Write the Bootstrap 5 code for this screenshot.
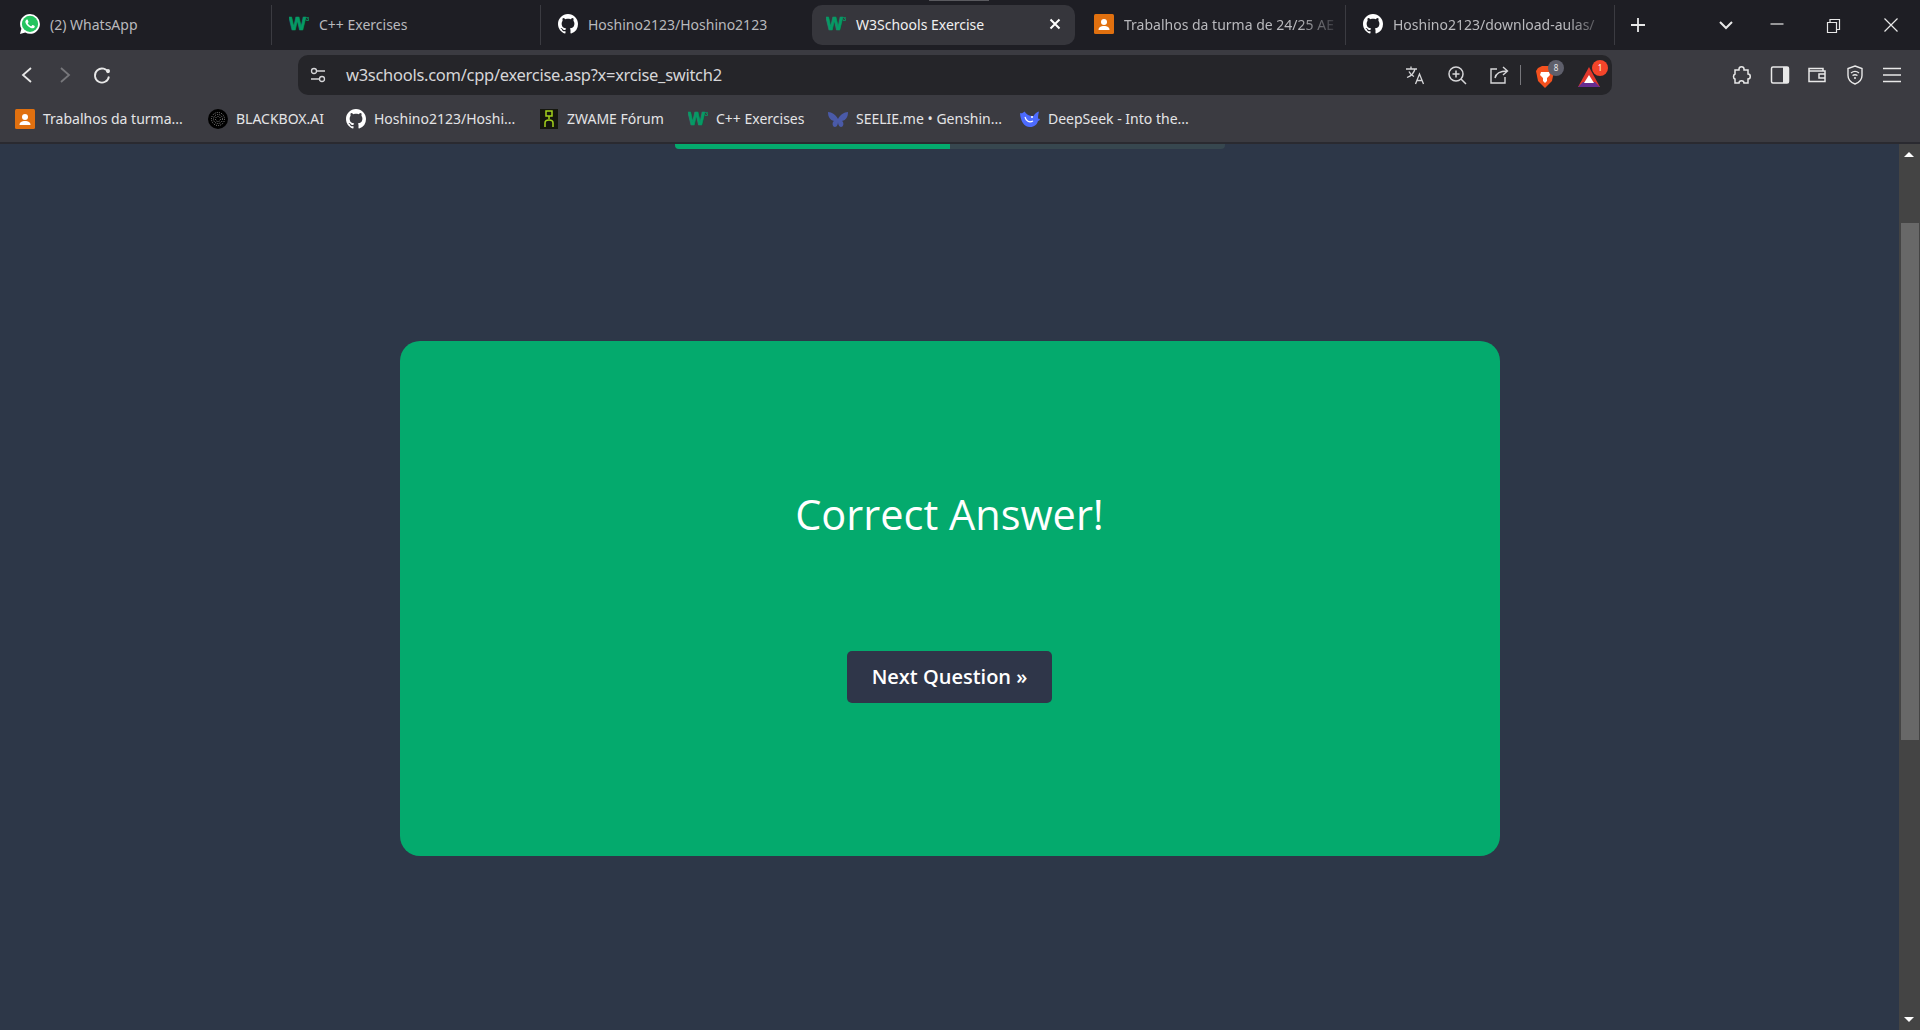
<!DOCTYPE html>
<html lang="en">
<head>
  <meta charset="UTF-8">
  <title>W3Schools Exercise</title>
  <link href="https://cdn.jsdelivr.net/npm/bootstrap@5.3.3/dist/css/bootstrap.min.css" rel="stylesheet">
  <style>
    body {
      height: 1030px;
      overflow: hidden;
      background-color: #2d3748;
      font-family: "Noto Sans", "Open Sans", sans-serif;
    }
    .tab-strip {
      height: 50px;
      padding: 5px 0 0 3px;
      background-color: #1e1e24;
      font-size: 14px;
      color: #b9b9bd;
      position: relative;
    }
    .tab-strip::before {
      content: "";
      position: absolute;
      left: 929px;
      top: 0;
      width: 60px;
      height: 1px;
      background-color: #5a5a5f;
    }
    .tab-item {
      width: 269px;
      height: 40px;
      padding: 0 0 2px 17px;
      flex: none;
      white-space: nowrap;
      overflow: hidden;
      border-right: 1px solid #3b3b41;
    }
    .tab-item.no-sep { border-right-color: transparent; }
    .tab-active {
      width: 263px;
      margin: 0 2px 0 2px;
      padding: 0 10px 2px 14px;
      height: 40px;
      flex: none;
      border-radius: 10px;
      background-color: #36363c;
      color: #f0f0f0;
    }
    .tab-fade {
      width: 218px;
      -webkit-mask-image: linear-gradient(to right, #000 80%, transparent);
      mask-image: linear-gradient(to right, #000 80%, transparent);
    }
    .fav { width: 20px; height: 20px; flex: none; margin-right: 10px; }
    .win-btn { position: absolute; top: 15px; width: 20px; height: 20px; }
    .tool-row {
      height: 45px;
      background-color: #3b3b41;
    }
    .nav-icons { width: 298px; padding: 7px 0 0 17px; gap: 17.5px; margin-top: 8px; }
    .ico { width: 20px; height: 20px; flex: none; }
    .addr-bar {
      width: 1314px;
      height: 40px;
      margin-top: 5px;
      padding: 0 11px 0 10px;
      border-radius: 10px;
      background-color: #252529;
      color: #d6d6d8;
      font-size: 16.5px;
      letter-spacing: -.28px;
    }
    .addr-text { margin-left: 18px; }
    .addr-tools { gap: 22px; }
    .addr-sep { width: 1px; height: 20px; background-color: #77777b; margin: 0 -10px 0 -11px; }
    .badge-host { position: relative; width: 24px; height: 24px; }
    .badge-host + .badge-host { margin-left: -2px; }
    .mini-count {
      position: absolute;
      top: -3px;
      right: -7px;
      width: 16px;
      height: 16px;
      border-radius: 50%;
      font-size: 8px;
      line-height: 16px;
      text-align: center;
      color: #e8e8e8;
    }
    .ext-icons { padding-left: 120px; gap: 17.5px; margin-top: 7px; }
    .mark-row {
      height: 49px;
      padding: 0 0 0 15px;
      background-color: #3b3b41;
      border-bottom: 2px solid #2a2a30;
      color: #e4e4e6;
      font-size: 14px;
      white-space: nowrap;
    }
    .mark-item { flex: none; }
    .mark-item .fav { margin-right: 8px; }
    .mark-item:nth-child(1) { width: 193px; }
    .mark-item:nth-child(2) { width: 138px; }
    .mark-item:nth-child(3) { width: 193px; }
    .mark-item:nth-child(4) { width: 149px; }
    .mark-item:nth-child(5) { width: 140px; }
    .mark-item:nth-child(6) { width: 192px; }
    .page-area { height: 886px; }
    .page-main { width: 1899px; }
    .top-progress {
      width: 550px;
      height: 5px;
      background-color: #37474f;
      border-radius: 0 0 4px 4px;
    }
    .top-progress .progress-bar { background-color: #04aa6d; }
    .result-panel {
      width: 1100px;
      height: 515px;
      margin-top: 192px;
      border-radius: 20px;
      background-color: #04aa6d;
      color: #fff;
    }
    .result-title {
      margin: 143px 0 0 0;
      font-size: 41.5px;
      line-height: 60px;
      font-weight: 400;
      font-family: "Open Sans", "Noto Sans", sans-serif;
    }
    .next-btn {
      width: 205px;
      height: 52px;
      margin-top: 107px;
      padding: 0;
      border: 0;
      border-radius: 5px;
      background-color: #2f3649;
      color: #fff;
      font-size: 20px;
      font-weight: 600;
      font-family: "Open Sans", "Noto Sans", sans-serif;
    }
    .next-btn:hover { background-color: #2f3649; color: #fff; }
    .fake-scroll {
      width: 21px;
      background-color: #444;
      padding: 0 1px 0 2px;
    }
    .scroll-thumb {
      height: 517px;
      margin-top: 79px;
      background-color: #686868;
    }
    .scroll-up, .scroll-down {
      position: absolute;
      left: 1904px;
      width: 0;
      height: 0;
      border-left: 5px solid transparent;
      border-right: 5px solid transparent;
    }
    .scroll-up { top: 152px; border-bottom: 5px solid #fff; }
    .scroll-down { top: 1017px; border-top: 5px solid #fff; }
  </style>
</head>
<body>

  <svg width="0" height="0" class="position-absolute">
    <defs>
      <symbol id="gh" viewBox="0 0 16 16">
        <path fill="#fff" d="M8 0C3.58 0 0 3.58 0 8c0 3.54 2.29 6.53 5.47 7.59.4.07.55-.17.55-.38 0-.19-.01-.82-.01-1.49-2.01.37-2.53-.49-2.69-.94-.09-.23-.48-.94-.82-1.13-.28-.15-.68-.52-.01-.53.63-.01 1.08.58 1.23.82.72 1.21 1.87.87 2.33.66.07-.52.28-.87.51-1.07-1.78-.2-3.64-.89-3.64-3.95 0-.87.31-1.59.82-2.15-.08-.2-.36-1.02.08-2.12 0 0 .67-.21 2.2.82.64-.18 1.32-.27 2-.27.68 0 1.36.09 2 .27 1.53-1.04 2.2-.82 2.2-.82.44 1.1.16 1.92.08 2.12.51.56.82 1.27.82 2.15 0 3.07-1.87 3.75-3.65 3.95.29.25.54.73.54 1.48 0 1.07-.01 1.93-.01 2.2 0 .21.15.46.55.38A8.012 8.012 0 0 0 16 8c0-4.42-3.58-8-8-8z"/>
      </symbol>
      <symbol id="w3" viewBox="0 0 20 20">
        <text x="0" y="16" font-family="Liberation Sans" font-weight="700" font-size="18" fill="#059a66" stroke="#059a66" stroke-width=".7">W</text>
        <text x="17" y="7" font-family="Liberation Sans" font-weight="700" font-size="6" fill="#059a66">3</text>
      </symbol>
      <symbol id="classroom" viewBox="0 0 20 20">
        <rect width="20" height="20" rx="1.5" fill="#e0700f"/>
        <circle cx="10" cy="8" r="3" fill="#fff"/>
        <path fill="#fff" d="M4.5 16c0-3 2.5-4 5.5-4s5.500 1 5.500 4z"/>
      </symbol>
    </defs>
  </svg>

  <div class="tab-strip d-flex align-items-start">
    <div class="tab-item d-flex align-items-center">
      <svg class="fav" viewBox="0 0 16 16">
        <path fill="#fff" d="M13.601 2.326A7.854 7.854 0 0 0 7.994 0C3.627 0 .068 3.558.064 7.926c0 1.399.366 2.76 1.057 3.965L0 16l4.204-1.102a7.933 7.933 0 0 0 3.79.965h.004c4.368 0 7.926-3.558 7.93-7.93A7.898 7.898 0 0 0 13.6 2.326z"/>
        <circle cx="8" cy="7.900" r="6.500" fill="#25c45f"/>
        <path fill="#fff" d="M11.42 9.49c-.19-.09-1.1-.54-1.27-.61s-.29-.09-.42.1-.48.6-.59.73-.21.14-.4 0a5.13 5.13 0 0 1-1.49-.92 5.25 5.25 0 0 1-1-1.29c-.11-.18 0-.28.08-.38s.18-.21.28-.32a1.39 1.39 0 0 0 .18-.31.34.34 0 0 0 0-.33c0-.09-.42-1-.58-1.37s-.3-.32-.41-.32h-.4a.72.72 0 0 0-.5.23 2.1 2.1 0 0 0-.65 1.55A3.59 3.59 0 0 0 5 8.2 8.32 8.32 0 0 0 8.19 11c.44.19.78.3 1.05.39a2.53 2.53 0 0 0 1.17.07 1.93 1.93 0 0 0 1.26-.88 1.67 1.67 0 0 0 .11-.88c-.05-.07-.17-.12-.36-.21z"/>
      </svg>
      <span>(2) WhatsApp</span>
    </div>
    <div class="tab-item d-flex align-items-center">
      <svg class="fav"><use href="#w3"/></svg><span>C++ Exercises</span>
    </div>
    <div class="tab-item no-sep d-flex align-items-center">
      <svg class="fav"><use href="#gh"/></svg><span>Hoshino2123/Hoshino2123</span>
    </div>
    <div class="tab-active d-flex align-items-center">
      <svg class="fav"><use href="#w3"/></svg><span class="flex-grow-1">W3Schools Exercise</span>
      <svg class="ico" viewBox="0 0 20 20"><path stroke="#fff" stroke-width="2" d="M5.500 5.500l9 9M14.500 5.500l-9 9"/></svg>
    </div>
    <div class="tab-item d-flex align-items-center">
      <svg class="fav"><use href="#classroom"/></svg><span class="tab-fade">Trabalhos da turma de 24/25 AE</span>
    </div>
    <div class="tab-item d-flex align-items-center">
      <svg class="fav"><use href="#gh"/></svg><span class="tab-fade">Hoshino2123/download-aulas/</span>
    </div>
    <svg class="win-btn" style="left:1628px" viewBox="0 0 20 20"><path stroke="#e8e8e8" stroke-width="1.800" d="M10 3v14M3 10h14"/></svg>
    <svg class="win-btn" style="left:1716px" viewBox="0 0 20 20"><path stroke="#e8e8e8" stroke-width="2" fill="none" d="M4 7l6 6 6-6"/></svg>
    <svg class="win-btn" style="left:1767px" viewBox="0 0 20 20"><path stroke="#e8e8e8" stroke-width="1.200" d="M3.500 9h13"/></svg>
    <svg class="win-btn" style="left:1823px" viewBox="0 0 20 20"><path stroke="#e8e8e8" stroke-width="1.200" fill="none" d="M4.500 7.500h9v10h-9zM7 7.500V4.500h9.500v10h-3"/></svg>
    <svg class="win-btn" style="left:1881px" viewBox="0 0 20 20"><path stroke="#e8e8e8" stroke-width="1.200" d="M3.500 3.500l13 13M16.500 3.500l-13 13"/></svg>
  </div>

  <div class="tool-row d-flex align-items-start">
    <div class="nav-icons d-flex align-items-center">
      <svg class="ico" viewBox="0 0 20 20"><path stroke="#e8e8e8" stroke-width="1.800" fill="none" d="M14 3l-8 7 8 7"/></svg>
      <svg class="ico" viewBox="0 0 20 20"><path stroke="#77777b" stroke-width="1.800" fill="none" d="M6 3l8 7-8 7"/></svg>
      <svg class="ico" viewBox="0 0 20 20"><path stroke="#e8e8e8" stroke-width="1.800" fill="none" d="M16.500 8a7 7 0 1 0 .4 3.500"/><circle cx="16" cy="6" r="2" fill="#e8e8e8"/></svg>
    </div>
    <div class="addr-bar d-flex align-items-center">
      <svg class="ico" viewBox="0 0 20 20"><g stroke="#d6d6d8" stroke-width="1.300" fill="none"><circle cx="6" cy="6" r="2.500"/><path d="M9 6h8M3 14h8"/><circle cx="14" cy="14" r="2.500"/></g></svg>
      <span class="addr-text flex-grow-1">w3schools.com/cpp/exercise.asp?x=xrcise_switch2</span>
      <div class="addr-tools d-flex align-items-center">
        <svg class="ico" viewBox="0 0 20 20"><g stroke="#d6d6d8" stroke-width="1.300" fill="none"><path d="M1 4h11M6 1.500V4M10 4c-1 4-4 7-8 8.500M4 6.500c1 2.500 3 4 5 5M10.500 19l4-10 4 10M12 15.500h5"/></g></svg>
        <svg class="ico" viewBox="0 0 20 20"><g stroke="#d6d6d8" stroke-width="1.500" fill="none"><circle cx="9" cy="9" r="7"/><path d="M14 14l5 5M9 5.500v7M5.500 9h7"/></g></svg>
        <svg class="ico" viewBox="0 0 20 20"><g stroke="#d6d6d8" stroke-width="1.400" fill="none"><path d="M8 4H2v14h14v-6"/><path d="M6 13c1-5 5-7 12-7M14 2l4.500 4-4.500 4"/></g></svg>
        <span class="addr-sep"></span>
        <div class="badge-host">
          <svg width="24" height="24" viewBox="0 0 24 24"><path fill="#f4511e" d="M5 3l4-2h6l4 2 2 3-2 10-7 7-7-7L3 6z"/><path fill="#fff" d="M8 7h8l1 3-3 3v3l-2 2-2-2v-3L7 10z"/></svg>
          <span class="mini-count" style="background:#5e5f6b">8</span>
        </div>
        <div class="badge-host">
          <svg width="24" height="24" viewBox="0 0 24 24"><path fill="#e2382c" d="M12 2L1 22h22z"/><path fill="#662d91" d="M1 22l5-5h12l5 5z"/><path fill="#fff" d="M12 10l-5 8h10z"/></svg>
          <span class="mini-count" style="background:#f4452a;color:#fff">1</span>
        </div>
      </div>
    </div>
    <div class="ext-icons d-flex align-items-center pt-2">
      <svg class="ico" viewBox="0 0 20 20"><path stroke="#e8e8e8" stroke-width="1.500" fill="none" d="M7 4c0-3 5-3 5 0v1h4v4c3 0 3 5 0 5v4h-4c0-3-5-3-5 0H3v-4c-2-.5-2-4 0-5V5h4z"/></svg>
      <svg class="ico" viewBox="0 0 20 20"><rect x="1.500" y="2" width="17" height="16" rx="1.500" stroke="#e8e8e8" stroke-width="1.500" fill="none"/><rect x="13" y="2" width="5.500" height="16" fill="#e8e8e8"/></svg>
      <svg class="ico" viewBox="0 0 20 20"><path stroke="#e8e8e8" stroke-width="1.500" fill="none" d="M2 6V3.500h14V6M2 5v11.500h16V6H2M18 9h-6v4h6"/></svg>
      <svg class="ico" viewBox="0 0 20 20"><path stroke="#e8e8e8" stroke-width="1.400" fill="none" d="M10 1l7 2.500v7c0 4-3 7-7 8.500-4-1.500-7-4.500-7-8.500v-7zM6 8c2.500-2 5.500-2 8 0M7.500 10.500c1.500-1 3.500-1 5 0"/><circle cx="10" cy="13" r="1" fill="#e8e8e8"/></svg>
      <svg class="ico" viewBox="0 0 20 20"><path stroke="#e8e8e8" stroke-width="1.500" d="M1 3.500h18M1 10h18M1 16.500h18"/></svg>
    </div>
  </div>

  <div class="mark-row d-flex align-items-center">
    <div class="mark-item d-flex align-items-center"><svg class="fav"><use href="#classroom"/></svg><span>Trabalhos da turma...</span></div>
    <div class="mark-item d-flex align-items-center">
      <svg class="fav" viewBox="0 0 20 20"><circle cx="10" cy="10" r="10" fill="#000"/><g fill="none" stroke="#8a8a8a" stroke-dasharray="1 1.200"><circle cx="10" cy="10" r="2.500"/><circle cx="10" cy="10" r="4.500"/><circle cx="10" cy="10" r="6.500"/></g></svg>
      <span>BLACKBOX.AI</span>
    </div>
    <div class="mark-item d-flex align-items-center"><svg class="fav"><use href="#gh"/></svg><span>Hoshino2123/Hoshi...</span></div>
    <div class="mark-item d-flex align-items-center">
      <svg class="fav" viewBox="0 0 20 20"><rect x="1" width="18" height="20" fill="#15170e"/><path stroke="#a4d21c" stroke-width="1.500" fill="none" d="M7 2h6v5H7zM10 7v3M6 18v-4c0-4 8-4 8 0v4"/></svg>
      <span>ZWAME Fórum</span>
    </div>
    <div class="mark-item d-flex align-items-center"><svg class="fav"><use href="#w3"/></svg><span>C++ Exercises</span></div>
    <div class="mark-item d-flex align-items-center">
      <svg class="fav" viewBox="0 0 20 20"><path fill="#4a5aa8" d="M0 3c4 0 8 3 10 7 2-4 6-7 10-7 0 5-2 8-6 9 2 1 2 6-1 6-2 0-3-3-3-5 0 2-1 5-3 5-3 0-3-5-1-6C2 11 0 8 0 3z"/></svg>
      <span>SEELIE.me • Genshin...</span>
    </div>
    <div class="mark-item d-flex align-items-center">
      <svg class="fav" viewBox="0 0 20 20"><path fill="#4d6bfe" d="M0 4c.5 8 4 14 10 14 4.500 0 7-2.500 8-6 1 0 1.700-.8 2-2l-2-.5c0-3 .5-5 1-7-2 .5-4 2-5.500 4.500-3.500.5-6.500-1-9-4.500C3 4 1.500 4.800 0 4z"/><path stroke="#fff" stroke-width="1.200" fill="none" d="M5 8c1 4 4 6 8 4"/><circle cx="12" cy="8" r="1" fill="#fff"/></svg>
      <span>DeepSeek - Into the...</span>
    </div>
  </div>

  <div class="page-area d-flex position-relative">
    <div class="page-main d-flex flex-column align-items-center">
      <div class="progress top-progress">
        <div class="progress-bar" style="width:50%"></div>
      </div>
      <div class="card border-0 result-panel align-items-center text-center">
        <h2 class="result-title">Correct Answer!</h2>
        <button type="button" class="btn next-btn">Next Question »</button>
      </div>
    </div>
    <div class="fake-scroll">
      <div class="scroll-thumb"></div>
    </div>
  </div>
  <span class="scroll-up"></span>
  <span class="scroll-down"></span>

</body>
</html>
